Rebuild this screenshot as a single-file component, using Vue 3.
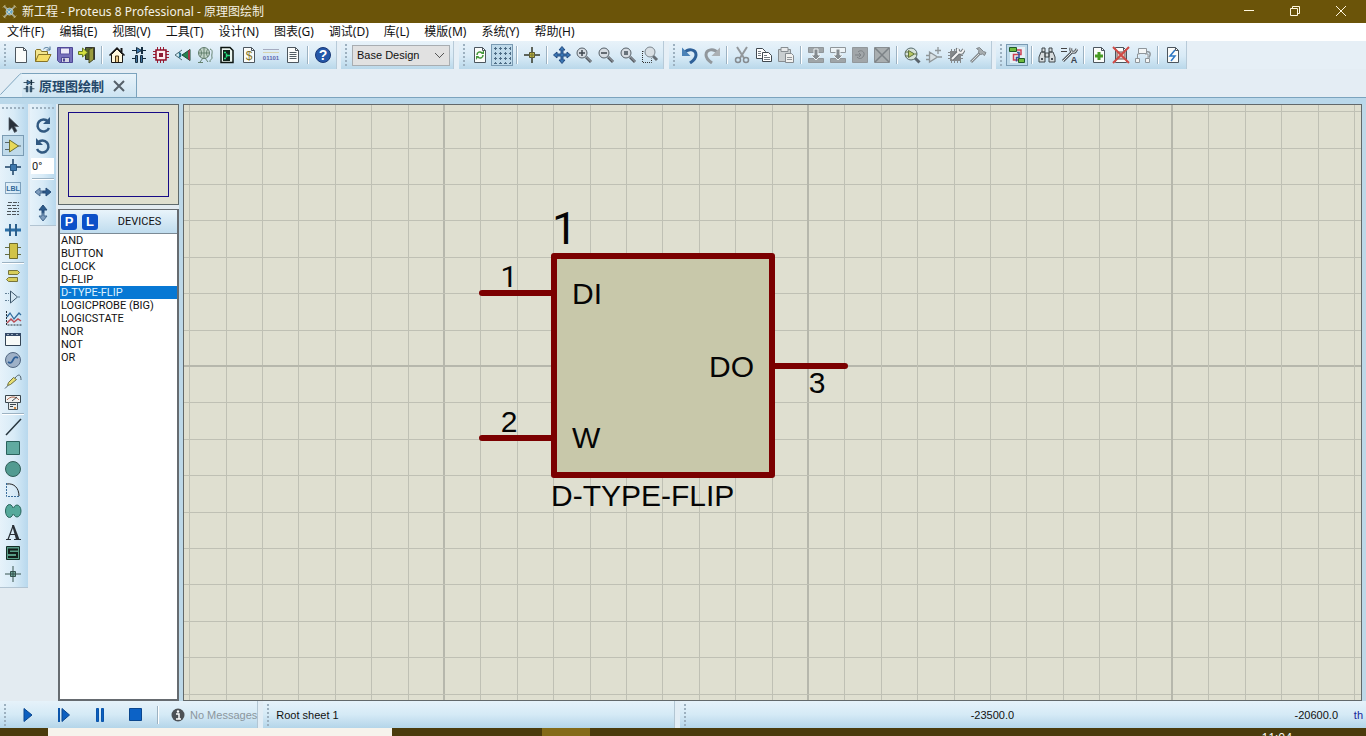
<script setup>
import { ref } from 'vue'

const menus = ['文件(F)', '编辑(E)', '视图(V)', '工具(T)', '设计(N)', '图表(G)', '调试(D)', '库(L)', '模版(M)', '系统(Y)', '帮助(H)']

const lens = '<path d="M11 11l5 5" stroke="#555b62" stroke-width="3"/><path d="M11.500 11l5 5" stroke="#a9b0b8"/><circle cx="7" cy="7" r="5" fill="#d6dce2" stroke="#566068"/>'
const page = '<path d="M3.500 1.500h8l3 3v12h-11z" fill="#fbfcfa" stroke="#4c565e"/><path d="M11.500 1.500v3h3" fill="none" stroke="#4c565e"/>'

const icons = {
  file: page,
  open: '<path d="M1.500 15.500v-11l1-1h4l1 2h6v3" fill="#f3e58c" stroke="#867326"/><path d="M1.500 15.500l3-7h12.500l-3.500 7z" fill="#f5dd66" stroke="#867326"/><path d="M9.500 3c2-2 4-2 6 0M16 .5v3.500h-3.500" fill="none" stroke="#456f91"/>',
  save: '<path d="M1.500 1.500h15v15h-13l-2-2z" fill="#7770bb" stroke="#4d4795"/><path d="M4.500 2h9v6h-9z" fill="#eceaf8" stroke="#5a53a1"/><path d="M5.500 11.500h8v5h-8z" fill="#d6d5e2" stroke="#4d4795"/><path d="M7 12.500h2v3H7z" fill="#4d4795"/>',
  exit: '<path d="M7.500 1.500h9v12h-9z" fill="#55642b" stroke="#333"/><path d="M11 3.500l4.500-2v12L11 17z" fill="#9a9b3e" stroke="#454a24"/><path d="M.5 5.500h4V2l5 4.500-5 4.500V8.500h-4z" fill="#d3df40" stroke="#647b25"/>',
  home: '<path d="M3.500 8.500v8h11v-8L9 3z" fill="#fff8de" stroke="#171717"/><path d="M1.500 9.500L9 2l7.500 7.500" fill="none" stroke="#171717" stroke-width="1.500"/><path d="M7.500 16v-6h3v6" fill="#e9c98b" stroke="#463618"/><path d="M13.500 2v4" stroke="#171717" stroke-width="2"/>',
  schem: '<path d="M2 4.500h14M2 12.500h4M12 12.500h4" stroke="#162d3e" fill="none"/><path d="M6.500 1.500l5 3-5 3z" fill="#3d78ae" stroke="#162d3e"/><path d="M12 1v7" stroke="#162d3e" stroke-width="2"/><path d="M5.500 9.500h2v7h-2zM10.500 9.500h2v7h-2z" fill="#3d6f9c" stroke="#162d3e"/>',
  chip: '<path d="M5.500 1v16M8.500 1v16M11.500 1v16M1 5.500h16M1 8.500h16M1 11.500h16" stroke="#9c2237"/><path d="M4 4h10v10H4z" fill="#fbeef0" stroke="#8e0e27" stroke-width="1.500"/><path d="M7 7h4v4H7z" fill="#8e1b35"/>',
  view3d: '<path d="M8 4L1 9l7 5" fill="#d3edf4" stroke="#506c77"/><path d="M5 7c2 1 2 3 0 4" stroke="#246d8a" stroke-width="2" fill="none"/><path d="M8 9l8-5.500v11z" fill="#278251" stroke="#1c4b37"/><path d="M14 5l2-1.500v11L14 13z" fill="#a33445"/>',
  gerber: '<circle cx="8" cy="7" r="5.500" fill="#c2d4c9" stroke="#637d70"/><path d="M2 7h12M8 1.500v11M4 3c2 2 2 6 0 8M12 3c-2 2-2 6 0 8M4 16l3-4M12 16l-3-4M2 16.500h5M14 3c4 1 1 6 2 8s-3 3-2 5" fill="none" stroke="#64816f"/>',
  pcb: '<path d="M3 1.500h9l3 3v12H3z" fill="#eaf4ee" stroke="#0c1512" stroke-width="1.500"/><path d="M5 4h7v11H5z" fill="#10241c"/><path d="M6 6.500h2M6 12.500h2M8.500 7.500v4M9 9.500h3" stroke="#25dc7c" fill="none" stroke-width="1.500"/>',
  bom: page + '<text x="9" y="14" text-anchor="middle" font-family="Liberation Sans" font-size="12" fill="#847425">$</text>',
  bits: '<path d="M1 3.500h16" stroke="#a5abc0"/><path d="M1 6.500h16" stroke="#d6d3b0"/><text x="9" y="14" text-anchor="middle" font-family="Liberation Sans" font-weight="bold" font-size="6" fill="#5f67b0">01101</text>',
  notes: page + '<path d="M5.500 6.500h7M5.500 8.500h7M5.500 10.500h7M5.500 12.500h7" stroke="#525d64"/>',
  help: '<circle cx="9" cy="9" r="7.500" fill="#2557a8" stroke="#183876"/><text x="9" y="14" text-anchor="middle" font-family="Liberation Sans" font-weight="bold" font-size="14" fill="#fff">?</text>',
  refresh: page + '<path d="M6 9c0-3 3-4 5-2M12 9c0 3-3 4-5 2" fill="none" stroke="#429638" stroke-width="1.500"/><path d="M10 8h3V4zM8 10H5v4z" fill="#429638"/>',
  grid: '<path d="M1 2.500h17M1 7.500h17M1 12.500h17M1 17.500h17M2.500 1v17M7.500 1v17M12.500 1v17M17.500 1v17" stroke="#4d6c85" stroke-dasharray="3 2"/>',
  origin: '<path d="M9 1v16M1 9h16" stroke="#353929" stroke-width="1.500"/><path d="M6.500 6.500h5v5h-5z" fill="#c1b63b" stroke="#525333"/><path d="M9 6v6M6 9h6" stroke="#75743a"/>',
  pan: '<path d="M9 .5l3 3.500h-2v4h4V6l3.500 3-3.500 3v-2h-4v4h2L9 17.500 6 14h2v-4H4v2L.5 9 4 6v2h4V4H6z" fill="#3b76b3" stroke="#234b80"/>',
  zoomIn: lens + '<path d="M4 7h6M7 4v6" stroke="#3e464d" stroke-width="1.500"/>',
  zoomOut: lens + '<path d="M4 7h6" stroke="#3e464d" stroke-width="1.500"/>',
  zoomAll: lens + '<path d="M5 5h4v4H5z" fill="#68737b"/>',
  zoomArea: '<path d="M1.500 5v11.500h9v-4M1.500 5.500h2" fill="none" stroke="#333" stroke-dasharray="1 1"/><path d="M12 10l4 4" stroke="#666f77" stroke-width="3"/><circle cx="9" cy="6" r="5" fill="#d8dfe4" stroke="#7b858d"/>',
  undo: '<path d="M3 7c4-5 12-4 12 2 0 3-3 6-6 8" fill="none" stroke="#2f6199" stroke-width="3"/><path d="M1 1.500v8.500h8.500z" fill="#4b82b7"/>',
  redo: '<path d="M15 7C11 2 3 3 3 9c0 3 3 6 6 8" fill="none" stroke="#91979c" stroke-width="3"/><path d="M17 1.500v8.500H8.500z" fill="#abb0b4"/>',
  cut: '<path d="M4 1l7 11M14 1L7 12" stroke="#92979b" stroke-width="2"/><circle cx="5" cy="14" r="2.500" fill="none" stroke="#858b90" stroke-width="1.500"/><circle cx="13" cy="14" r="2.500" fill="none" stroke="#858b90" stroke-width="1.500"/>',
  copy: '<path d="M1.500 2.500h6l3 3v7h-9z" fill="#fff" stroke="#414950"/><path d="M7.500 6.500h6l3 3v6h-9z" fill="#fff" stroke="#414950"/><path d="M3 5.500h3M3 7.500h3M3 9.500h3M9 9.500h3M9 11.500h6M9 13.500h6" stroke="#747d84"/>',
  paste: '<path d="M1.500 3.500h12v12h-12z" fill="#c9ced0" stroke="#888e92"/><path d="M4 1.500h7v4H4z" fill="#e8eaeb" stroke="#888e92"/><path d="M8.500 7.500h6l2 2v7h-8z" fill="#f1f1ef" stroke="#858b90"/><path d="M10 11.500h5M10 13.500h5" stroke="#92979b"/>',
  blkCopy: '<path d="M1.500 1.500h15v5h-15zM1.500 12.500h15v4h-15z" fill="#9fa5a8" stroke="#90969a"/><path d="M7 3h4v6h3l-5 5-5-5h3z" fill="#858b8f" stroke="#eef3f5"/>',
  blkMove: '<path d="M1.500 1.500h15v5h-15z" fill="#edf3f6" stroke="#90969a"/><path d="M1.500 12.500h15v4h-15z" fill="#9fa5a8" stroke="#90969a"/><path d="M7 3h4v6h3l-5 5-5-5h3z" fill="#858b8f" stroke="#eef3f5"/>',
  blkRot: '<path d="M1.500 1.500h15v15h-15z" fill="#a1a6a9" stroke="#92989c"/><path d="M7 6c3-3 7 0 6 3s-4 5-7 2M4 9h6M8 7l2 2-2 2" fill="none" stroke="#7c8185"/>',
  blkDel: '<path d="M1.500 1.500h15v15h-15z" fill="#a9aeb0" stroke="#898f93"/><path d="M2 2l14 14M16 2L2 16" stroke="#7c8286" stroke-width="1.500"/>',
  pick: '<path d="M12 12l4.500 4.500" stroke="#59636b" stroke-width="3"/><circle cx="8" cy="8" r="6" fill="#d7e2d9" stroke="#56696b"/><path d="M5.500 4.500l6 3.500-6 3.500zM2 6h3M2 10h3M12 8h2" fill="#b7c661" stroke="#5c7040"/>',
  make: '<path d="M4.500 6l8 5-8 5zM1 9.500h3M1 13.500h3M13 11h4M13 1v7M10 4.500h6" fill="#d7e0e4" stroke="#8f9699" stroke-width="1.300"/>',
  pack: '<path d="M4.500 3v14M7.500 3v14M10.500 3v14M13.500 8v9M1 6.500h12M1 9.500h15M1 12.500h15" stroke="#85898b"/><path d="M3 5h11v10H3z" fill="#85898b"/><path d="M5 13l7-7M11 2.500c-1 3 1 5 4 4l2-3" fill="none" stroke="#6e7579" stroke-width="4"/><path d="M5 13l7-7M11 2.500c-1 3 1 5 4 4l2-3" fill="none" stroke="#f4f5f5" stroke-width="2"/>',
  hammer: '<path d="M2 16l9-9" stroke="#838a8e" stroke-width="3"/><path d="M2.500 15.500l9-9" stroke="#d7dbdc"/><path d="M7.500 2.500l3-1 4 4 2.500 1-1.500 3-2-1.500-2 .5-2-2 .5-2z" fill="#a7adb0" stroke="#7f868a"/>',
  auto: '<path d="M2 1h15v16H2z" fill="#e6f0f5"/><path d="M9 4h4v4.500H5.500V14H10" fill="none" stroke="#cf4052" stroke-width="1.500"/><path d="M9 6.500h2v5H8.500v4" fill="none" stroke="#36529a" stroke-width="1.500"/><path d="M1.500 1.500h7v4h-7zM10.500 12.500h6v4h-6z" fill="#6fbb3d" stroke="#1f5a26"/>',
  find: '<path d="M3 6h4v10H1v-5zM11 6h4l2 5v5h-6zM4 2h3v4H4zM11 2h3v4h-3zM7 7h4v4H7z" fill="#d7dcde" stroke="#3e464b"/><path d="M3 13h2M13 13h2" stroke="#495258" stroke-width="2"/>',
  assign: '<path d="M1 2.500h6M1 5.500h6" stroke="#444"/><path d="M3 15l9-9M11 2c-1 3 1 5 4 4l2-3" fill="none" stroke="#555d63" stroke-width="3"/><path d="M3 15l9-9M11 2c-1 3 1 5 4 4l2-3" fill="none" stroke="#e2e5e6"/><text x="14" y="17" text-anchor="middle" font-family="Liberation Sans" font-weight="bold" font-size="9" fill="#39434e">A</text>',
  add: page + '<path d="M9 6v8M5 10h8" stroke="#479b25" stroke-width="3"/>',
  remove: page + '<path d="M5 6h8v7H5z" fill="#e4cdc9" stroke="#734d4d"/><path d="M1 1l16 16M17 1L1 17" stroke="#cf4944" stroke-width="2"/>',
  parent: '<path d="M4.500 2.500h8v5h-8zM1.500 12.500h4v4h-4zM11.500 12.500h4v4h-4zM3.500 12V8h2M11 8h3v4" fill="#f4f6f6" stroke="#8f969b"/><path d="M12 5.500c5 0 5 3 3 6" fill="none" stroke="#8f969b" stroke-width="1.500"/>',
  erc: page + '<path d="M11 4l-5 6h5l-4 5" fill="none" stroke="#2d77c4" stroke-width="1.500"/>',
  arrow: '<path d="M5 1.500v13l3-3 2.500 5 2.500-1.500-2.500-4.500h4z" fill="#28303a" stroke="#4f5862" stroke-width=".7"/>',
  comp: '<path d="M1 5.500h5M1 12.500h5M13 9h4" stroke="#566568"/><path d="M5.500 3l9 6-9 6z" fill="#e8d957" stroke="#6f712f"/>',
  junction: '<path d="M9 1v16M1 9h16" stroke="#1d4265" stroke-width="1.500"/><path d="M6.500 6.500h6v6h-6z" fill="#3d78ad" stroke="#265681"/>',
  label: '<path d="M1.500 3.500h15v11h-15z" fill="none" stroke="#315f86" stroke-dasharray="1 1"/><text x="9" y="12" text-anchor="middle" font-family="Liberation Sans" font-size="7" font-weight="bold" fill="#2f689a">LBL</text>',
  script: '<path d="M4 2.500h11M3 5.500h12M4 8.500h11M3 11.500h12M3 14.500h12" stroke="#4c5459" stroke-dasharray="4 1"/>',
  bus: '<path d="M1 9h16" stroke="#2b6fa7" stroke-width="3"/><path d="M6 3v12M12 3v12" stroke="#2c608c" stroke-width="2"/>',
  sub: '<path d="M1 5.500h16M1 12.500h16" stroke="#646d46"/><path d="M5.500 1.500h8v15h-8z" fill="#d1c349" stroke="#706d2c"/>',
  terminal: '<path d="M4.500 3.500h9l2 2-2 2h-9zM13.500 10.500h-9l-2 2 2 2h9z" fill="#d7cd5b" stroke="#77743b"/>',
  pin: '<path d="M1 5.500h4M1 12.500h4M14 9h3" stroke="#648197" stroke-dasharray="2 1"/><path d="M6.500 3l7 6-7 6z" fill="#d4e7f2" stroke="#3e576b"/>',
  graph: '<path d="M2.500 2v14h15" fill="none" stroke="#26323b" stroke-dasharray="2 1"/><path d="M3 8l3-4 4 6 5-6 2 2" fill="none" stroke="#326c9d" stroke-width="1.300"/><path d="M3 14l4-4 3 3 4-3 3 2" fill="none" stroke="#ba4d55" stroke-width="1.500"/>',
  tape: '<path d="M1.500 3.500h15v12h-15z" fill="#f8faf7" stroke="#344454"/><path d="M1 3h16v3H1z" fill="#344967"/><path d="M3 4.500h2M7 4.500h2M12 4.500h2" stroke="#9cadbc"/>',
  gen: '<circle cx="9" cy="9" r="7.500" fill="#9eb1c7" stroke="#536882"/><path d="M4 11c3 2 4 0 5-2s2-4 5-2" fill="none" stroke="#2e5f96" stroke-width="1.700"/>',
  probe: '<path d="M1 16.500l3-3" stroke="#50626d"/><path d="M3.500 13.500l1-3 5-5 3 2-6 5z" fill="#e7de73" stroke="#6d7042"/><path d="M11 6c4-5 6-3 6 2" fill="none" stroke="#50626d"/>',
  meter: '<path d="M1.500 2.500h15v7h-15z" fill="#f2f2f0" stroke="#38444b"/><path d="M3 7c3-4 9-4 12 0" fill="none" stroke="#a7604a"/><path d="M8 8l5-4" stroke="#38444b"/><path d="M4.500 9.500h9v7h-9z" fill="#e9eceb" stroke="#4a555b"/><path d="M6 11.500h6M6 13.500h3" stroke="#38444b"/><path d="M10 14h2v2h-2z" fill="#d08a42"/>',
  line: '<path d="M2 17L17 1" stroke="#25333b" stroke-width="1.500"/>',
  box: '<path d="M2.500 2.500h13v13h-13z" fill="#60aaa0" stroke="#2b625c"/>',
  circle: '<circle cx="9" cy="9" r="7.500" fill="#529b91" stroke="#315e58"/>',
  arc: '<path d="M2.500 2v13.500H16" fill="none" stroke="#3a6e9b" stroke-dasharray="2 1"/><path d="M3 3c7-1 12 4 12 12" fill="none" stroke="#222"/>',
  path: '<ellipse cx="5.500" cy="9" rx="4" ry="6.500" fill="#55a99b" stroke="#28645b"/><ellipse cx="13" cy="9" rx="4" ry="6" fill="#55a99b" stroke="#28645b"/><path d="M7.500 6h3v6h-3z" fill="#55a99b"/>',
  text: '<path d="M2 16.500h5M10 16.500h7M4 16.500L9 3M6 11.500h6" stroke="#293037" stroke-width="1.200" fill="none"/><path d="M8 2h2l5.500 14.500h-3.500z" fill="#293037"/>',
  symbol: '<path d="M2.500 2.500h13v13h-13z" fill="#579a85" stroke="#142e26"/><path d="M14 5.500H5v3.500h8v4H4" fill="none" stroke="#121e1a" stroke-width="2"/>',
  marker: '<path d="M9 1v16M1 9h16" stroke="#36534f"/><path d="M6.500 6.500h5v5h-5z" fill="#71a79a" stroke="#36534f"/><path d="M9 6v6M6 9h6" stroke="#36534f"/>',
  cw: '<path d="M14 5.500A6 6 0 1 0 15 12" fill="none" stroke="#315981" stroke-width="2.500"/><path d="M16 1v7H9z" fill="#315981"/>',
  ccw: '<path d="M4 5.500A6 6 0 1 1 3 12" fill="none" stroke="#315981" stroke-width="2.500"/><path d="M2 1v7h7z" fill="#315981"/>',
  flipH: '<path d="M1 9l5-4v3h3v2H6v3z" fill="#7d9cbd" stroke="#44688e"/><path d="M17 9l-5-4v3H9v2h3v3z" fill="#2c5b8c" stroke="#244b76"/>',
  flipV: '<path d="M9 1L5 6h3v3h2V6h3z" fill="#2c5b8c" stroke="#244b76"/><path d="M9 17l-4-5h3V9h2v3h3z" fill="#7d9cbd" stroke="#44688e"/>',
  play: '<path d="M5 2.500l8 6.500-8 6.500z" fill="#0c5fc0" stroke="#0a468e"/>',
  step: '<path d="M4 2v14" stroke="#0a54aa" stroke-width="2"/><path d="M7 2.500l7.500 6.500L7 15.500z" fill="#0c5fc0" stroke="#0a468e"/>',
  pause: '<path d="M5.500 2.500h2v13h-2zM10.500 2.500h2v13h-2z" fill="#0c5fc0" stroke="#0a54aa"/>',
  stop: '<path d="M2.500 2.500h12v12h-12z" fill="#0c62c6" stroke="#0a468e"/>',
  info: '<circle cx="9" cy="9" r="6.500" fill="#4d5156"/><path d="M7 8h3v5M7 13h5" stroke="#fff" stroke-width="1.500" fill="none"/><circle cx="9" cy="5.500" r="1.200" fill="#fff"/>',
  app: '<path d="M2 2l13 13M15 2L2 15" stroke="#a5a68e" stroke-width="2"/><path d="M1 4l3-3M13 1l3 3M1 13l3 3M13 16l3-3" stroke="#c9b768"/><circle cx="8.500" cy="8.500" r="4" fill="#6aa5c2" stroke="#c5c6a8"/><path d="M6 7l4 4M11 6l-5 5" stroke="#dfe4ca"/>'
}

const groupA = ['file', 'open', 'save', 'exit', '|', 'home', 'schem', 'chip', 'view3d', 'gerber', 'pcb', 'bom', 'bits', 'notes', '|', 'help']
const groupB = ['refresh', 'grid', '|', 'origin', '|', 'pan', 'zoomIn', 'zoomOut', 'zoomAll', 'zoomArea']
const groupC = ['undo', 'redo', '|', 'cut', 'copy', 'paste', '|', 'blkCopy', 'blkMove', 'blkRot', 'blkDel', '|', 'pick', 'make', 'pack', 'hammer']
const groupD = ['auto', '|', 'find', 'assign', '|', 'add', 'remove', 'parent', '|', 'erc']
const bars = [
  { id: 'a', items: groupA },
  { id: 'design', items: [] },
  { id: 'b', items: groupB },
  { id: 'c', items: groupC },
  { id: 'd', items: groupD }
]
const modes = ['arrow', 'comp', 'junction', 'label', 'script', 'bus', 'sub', '|', 'terminal', 'pin', 'graph', 'tape', 'gen', 'probe', 'meter', '|', 'line', 'box', 'circle', 'arc', 'path', 'text', 'symbol', 'marker']
const pressed = ['grid', 'auto', 'comp']

const devices = ['AND', 'BUTTON', 'CLOCK', 'D-FLIP', 'D-TYPE-FLIP', 'LOGICPROBE (BIG)', 'LOGICSTATE', 'NOR', 'NOT', 'OR']
const selected = ref('D-TYPE-FLIP')
const angle = ref('0°')

// Grid lines around the sheet origin; every tenth one is heavier.
const STEP = 36.4
const lines = Array.from({ length: 121 }, (_, i) => {
  const major = (i - 60) % 10 === 0
  return { at: Math.round((i - 60) * STEP) + (major ? 0 : 0.5), major }
})
</script>

<template>
  <div class="window">
    <header class="title">
      <svg class="logo" viewBox="0 0 18 18" v-html="icons.app"></svg>
      <span class="caption">新工程 - Proteus 8 Professional - 原理图绘制</span>
      <button class="ctl" aria-label="Minimize"><svg viewBox="0 0 12 12"><path d="M1 5.500h10" /></svg></button>
      <button class="ctl" aria-label="Restore"><svg viewBox="0 0 12 12"><path d="M1.500 3.500h7v7h-7zM3.500 3V1.500h7v7H9" /></svg></button>
      <button class="ctl" aria-label="Close"><svg viewBox="0 0 12 12"><path d="M1 1l10 10M11 1L1 11" /></svg></button>
    </header>

    <nav class="menu">
      <button v-for="m in menus" :key="m">{{ m }}</button>
    </nav>

    <div class="toolbars">
      <div v-for="bar in bars" :key="bar.id" class="bar" :class="bar.id">
        <i class="grip"></i>
        <select v-if="bar.id === 'design'" class="combo" aria-label="Design variant"><option>Base Design</option></select>
        <template v-for="(n, i) in bar.items" :key="i">
          <i v-if="n === '|'" class="sep"></i>
          <button v-else class="tool" :class="{ on: pressed.includes(n) }" :aria-label="n"><svg viewBox="0 0 18 18" v-html="icons[n]"></svg></button>
        </template>
      </div>
    </div>

    <div class="tabs">
      <svg class="slant" viewBox="0 0 22 25"><path d="M0 25V22.500L20 1.500Q21 .5 22 .5V25z" fill="#e0eff8" /><path d="M0 22.500L20 1.500Q21 .5 22 .5" fill="none" stroke="#7ba3bd" /></svg>
      <div class="tab">
        <svg viewBox="0 0 18 18" v-html="icons.schem"></svg>
        <span>原理图绘制</span>
        <button aria-label="Close tab"><svg viewBox="0 0 12 12"><path d="M1 1l10 10M11 1L1 11" /></svg></button>
      </div>
    </div>
    <div class="band"></div>

    <main class="work">
      <div class="side modes">
        <i class="hgrip"></i>
        <template v-for="(n, i) in modes" :key="i">
          <i v-if="n === '|'" class="hsep"></i>
          <button v-else class="mode" :class="{ on: pressed.includes(n) }" :aria-label="n"><svg viewBox="0 0 18 18" v-html="icons[n]"></svg></button>
        </template>
      </div>
      <div class="side orient">
        <i class="hgrip"></i>
        <button class="mode" aria-label="Rotate clockwise"><svg viewBox="0 0 18 18" v-html="icons.cw"></svg></button>
        <button class="mode" aria-label="Rotate anticlockwise"><svg viewBox="0 0 18 18" v-html="icons.ccw"></svg></button>
        <input v-model="angle" class="angle" aria-label="Angle">
        <i class="hsep"></i>
        <button class="mode" aria-label="Mirror horizontally"><svg viewBox="0 0 18 18" v-html="icons.flipH"></svg></button>
        <button class="mode" aria-label="Mirror vertically"><svg viewBox="0 0 18 18" v-html="icons.flipV"></svg></button>
      </div>

      <aside class="panel">
        <div class="preview"><div class="sheet"></div></div>
        <div class="devices">
          <div class="head">
            <button class="pl">P</button>
            <button class="pl">L</button>
            <span>DEVICES</span>
          </div>
          <ul>
            <li v-for="d in devices" :key="d"><button :class="{ sel: d === selected }" @click="selected = d">{{ d }}</button></li>
          </ul>
        </div>
      </aside>

      <section class="canvas">
        <svg width="100%" height="100%">
          <g transform="translate(624 261)">
            <g shape-rendering="crispEdges">
              <g v-for="l in lines" :key="l.at">
                <line :x1="l.at" :x2="l.at" y1="-2200" y2="2200" :class="l.major ? 'major' : 'minor'" />
                <line :y1="l.at" :y2="l.at" x1="-2200" x2="2200" :class="l.major ? 'major' : 'minor'" />
              </g>
            </g>
            <g class="part">
              <path d="M-326-73h72M-326 72h72M-35 0h72" />
              <rect x="-254" y="-110" width="218" height="219" />
            </g>
            <g class="names">
              <text class="ref" x="-256" y="-122">1</text>
              <text class="one" x="-299" y="-79" text-anchor="middle">1</text>
              <text x="-299" y="66" text-anchor="middle">2</text>
              <text x="9" y="27" text-anchor="middle">3</text>
              <text x="-236" y="-62">DI</text>
              <text x="-236" y="82">W</text>
              <text x="-99" y="11">DO</text>
              <text x="-257" y="140">D-TYPE-FLIP</text>
            </g>
          </g>
        </svg>
      </section>
    </main>

    <footer class="status">
      <div class="cell sim">
        <i class="grip"></i>
        <button v-for="n in ['play', 'step', 'pause', 'stop']" :key="n" class="run" :aria-label="n"><svg viewBox="0 0 18 18" v-html="icons[n]"></svg></button>
        <i class="sep"></i>
        <svg class="info" viewBox="0 0 18 18" v-html="icons.info"></svg>
        <span class="msg">No Messages</span>
      </div>
      <div class="cell root"><i class="grip"></i><span>Root sheet 1</span></div>
      <div class="cell coords"><i class="grip"></i><span class="x">-23500.0</span><span class="y">-20600.0</span><span class="unit">th</span></div>
    </footer>

    <div class="taskbar">
      <div class="search"></div>
      <div class="active"></div>
      <span class="clock">11:04</span>
    </div>
  </div>
</template>

<style>
body { margin: 0; }
</style>

<style scoped>
* { box-sizing: border-box; }
.window { display: flex; flex-direction: column; height: 100vh; overflow: hidden; background: #e3ebf1; font: 11px/14px "Liberation Sans", "Noto Sans CJK SC", sans-serif; color: #111; }
button { border: 0; padding: 0; margin: 0; background: none; font: inherit; color: inherit; }
svg { display: block; }

.title { display: flex; align-items: center; height: 23px; flex: none; padding: 0 2px; background: #6b5409; color: #f4f1e6; }
.logo { width: 16px; height: 16px; margin-right: 4px; }
.caption { flex: 1; font: 12px/18px "Noto Sans", "Noto Sans CJK SC", sans-serif; white-space: nowrap; }
.ctl { width: 46px; height: 22px; display: flex; align-items: flex-start; padding-top: 4px; justify-content: center; }
.ctl svg { width: 12px; height: 12px; fill: none; stroke: #fff8e0; }

.menu { display: flex; flex: none; gap: 15px; height: 18px; padding-left: 7px; background: #fff; font: 12px/18px "Noto Sans", "Noto Sans CJK SC", sans-serif; }
.menu button { line-height: 18px; white-space: nowrap; }

.toolbars { display: flex; flex: none; height: 28px; background: #e6eff6; }
.bar { display: flex; align-items: center; padding-right: 2px; margin-right: 4px; border-right: 1px solid #b7cad8; background: linear-gradient(#e8f2f9, #d8eaf6 55%, #b9d8ea); }
.bar.design, .bar.b { margin-right: 5px; }
.grip { width: 10px; height: 24px; flex: none; background: radial-gradient(circle, #9cb0bf 1px, transparent 1px) 3px 0 / 4px 4px repeat-y; }
.sep { width: 8px; height: 18px; flex: none; background: linear-gradient(90deg, transparent 3px, #9cb2c2 3px, #9cb2c2 4px, #fff 4px, #fff 5px, transparent 5px); }
.tool { width: 22px; height: 22px; flex: none; display: flex; align-items: center; justify-content: center; border: 1px solid transparent; }
.tool svg, .mode svg, .run svg { width: 18px; height: 18px; flex: none; }
.on { border-color: #7a9bb3; background: #bfdaea; }
.combo { width: 98px; height: 21px; margin: 0 1px; padding: 0 20px 0 4px; border: 1px solid #a8adb1; border-radius: 0; appearance: none; font: 11px/18px "Liberation Sans", sans-serif; color: #111; background: linear-gradient(45deg, transparent 45%, #555 45%, #555 58%, transparent 58%) 82px 7px / 5px 5px no-repeat, linear-gradient(-45deg, transparent 45%, #555 45%, #555 58%, transparent 58%) 86px 7px / 5px 5px no-repeat, #e1e1e1; }

.tabs { display: flex; flex: none; height: 28px; padding-top: 4px; background: #e4edf4; }
.slant { width: 22px; height: 24px; }
.tab { display: flex; align-items: center; gap: 3px; padding-right: 11px; height: 25px; border: solid #7ba3bd; border-width: 1px 1px 0 0; background: linear-gradient(#e8f3fa, #cce3f1); }
.tab > svg { width: 14px; height: 16px; }
.tab span { font: bold 13px/18px "Noto Sans CJK SC", sans-serif; color: #24486a; white-space: nowrap; }
.tab button { margin-left: 6px; }
.tab button svg { width: 12px; height: 12px; fill: none; stroke: #56616a; stroke-width: 2; }
.band { flex: none; height: 7px; border-top: 1px solid #7ba3bd; background: #bad8ea; }

.work { display: flex; flex: 1; min-height: 0; }
.side { display: flex; flex-direction: column; align-items: center; align-self: flex-start; flex: none; background: linear-gradient(90deg, #e6f2fa, #d8ebf7 50%, #b8d8ed); border-bottom: 1px solid #b2c4d2; }
.modes { width: 28px; padding: 0 3px 3px 1px; margin-right: 2px; }
.orient { width: 26px; padding: 0 1px 2px 0; }
.hgrip { width: 24px; height: 10px; flex: none; background: radial-gradient(circle, #9cb0bf 1px, transparent 1px) 0 2px / 4px 4px repeat-x; }
.hsep { width: 22px; height: 4px; flex: none; background: linear-gradient(transparent 1px, #9cb2c2 1px, #9cb2c2 2px, #fff 2px, #fff 3px, transparent 3px); }
.mode { width: 22px; height: 21px; flex: none; display: flex; align-items: center; justify-content: center; border: 1px solid transparent; }
.mode.on { border-color: #7a9bb3; }
.angle { width: 23px; height: 16px; margin: 2px 0 3px; padding: 0 1px; border: 0; background: #fff; font: 11px/14px Roboto, sans-serif; color: #222; }

.panel { display: flex; flex-direction: column; flex: none; gap: 4px; width: 123px; padding-left: 2px; }
.preview { height: 101px; padding: 7px 9px; border: 1px solid #5f6a6c; background: #dfdfcf; }
.sheet { height: 85px; border: 1px solid #160a86; }
.devices { display: flex; flex-direction: column; flex: 1; min-height: 0; border: 1px solid #666b70; border-width: 1px 2px 2px; background: #fff; }
.head { display: flex; align-items: center; flex: none; gap: 5px; height: 24px; padding: 0 1px; border-bottom: 1px solid #7b8a95; background: linear-gradient(#e9f4fb, #bfdcee); }
.head span { flex: 1; text-align: center; font: 11px/14px Roboto, sans-serif; }
.pl { width: 16px; height: 16px; border-radius: 3px; background: #0c50c8; color: #fff; font: bold 13px/16px "Liberation Sans", sans-serif; }
ul { list-style: none; margin: 0; padding: 0; }
li button { display: block; width: 100%; height: 13px; padding-left: 1px; text-align: left; font: 11px/13px Roboto, sans-serif; color: #111; }
li .sel { background: #0778d4; color: #dff2ff; }

.canvas { flex: 1; min-width: 0; margin: 0 4px; border: 1px solid #62686a; background: #dfdfd0; overflow: hidden; box-shadow: 0 0 0 4px #bdd8e8; clip-path: inset(0 -4px 0 -4px); }
.minor { stroke: #bfc0b4; }
.major { stroke: #b6b7ac; stroke-width: 2px; }
.part path { stroke: #7b0000; stroke-width: 6px; stroke-linecap: round; }
.part rect { fill: #c8c8aa; stroke: #7b0000; stroke-width: 6px; stroke-linejoin: round; }
.names { font: 30px "Liberation Sans", sans-serif; fill: #050505; }
.names .one { font-family: Roboto, sans-serif; }
.names .ref { font: 45px Roboto, sans-serif; }

.status { display: flex; flex: none; height: 27px; background: #e2edf5; }
.cell { display: flex; align-items: center; background: linear-gradient(#e6f2fa, #d5eaf6 50%, #b4d5e9); border-right: 1px solid #b3c6d3; white-space: nowrap; }
.sim { margin-right: 5px; }
.run { width: 36px; display: flex; justify-content: center; }
.sim .sep { margin-right: 4px; }
.info { width: 18px; height: 18px; margin: 0 3px; }
.msg { color: #8b969d; }
.root { flex: 411 1 0; margin-right: 5px; }
.root span { padding-left: 3px; }
.coords { flex: 686 1 0; border: 0; }
.x, .y { text-align: right; flex: 325 1 0; }
.unit { width: 28px; text-align: right; padding-right: 3px; color: #15259a; }

.taskbar { display: flex; flex: none; height: 8px; overflow: hidden; background: #4b3b0c; padding-left: 48px; }
.search { flex: 0 0 344px; background: #f6f3ec; }
.active { flex: 0 0 48px; margin-left: 150px; background: #846a18; }
.clock { margin: 3px 74px 0 auto; color: #fff; font: 12px/14px "Open Sans", sans-serif; }
</style>
